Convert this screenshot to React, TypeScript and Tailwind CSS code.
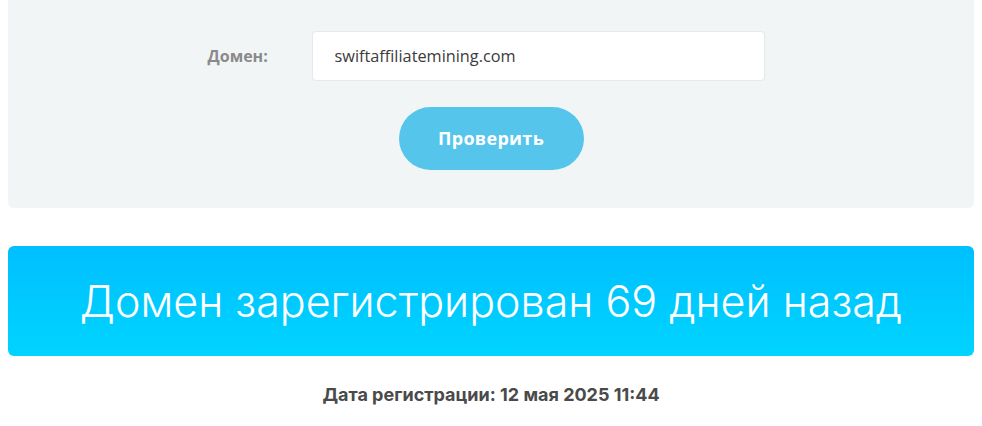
export default function App() {
  return (
    <div className="w-[982px] h-[426px] bg-white px-2 font-['Inter',sans-serif]">
      <section className="h-[208px] bg-[#f2f5f6] rounded-b-md flex flex-col items-center pt-[31px]">
        <div className="flex items-center mr-[10px]">
          <label className="w-[104px] text-[16px] font-bold text-[#8a8a8a] font-['Open_Sans',sans-serif]">
            Домен:
          </label>
          <input
            className="w-[453px] h-[50px] bg-white border border-[#e6e9eb] rounded-sm px-[22px] text-[16.3px] text-[#3b3b3b] outline-none font-['Open_Sans',sans-serif]"
            defaultValue="swiftaffiliatemining.com"
          />
        </div>
        <button className="mt-[26px] w-[185px] h-[63px] rounded-full bg-[#55c5ec] text-white text-[18px] font-bold font-['Open_Sans',sans-serif] tracking-[0.3px]">
          Проверить
        </button>
      </section>
      <div className="mt-[38px] h-[110px] rounded-md bg-gradient-to-b from-[#00bfff] to-[#00d4ff] flex items-center justify-center">
        <h1 className="text-white text-[43px] font-light">
          Домен зарегистрирован 69 дней назад
        </h1>
      </div>
      <p className="mt-[25px] text-center text-[18px] font-bold text-[#4a4a4a]">
        Дата регистрации: 12 мая 2025 11:44
      </p>
    </div>
  );
}
